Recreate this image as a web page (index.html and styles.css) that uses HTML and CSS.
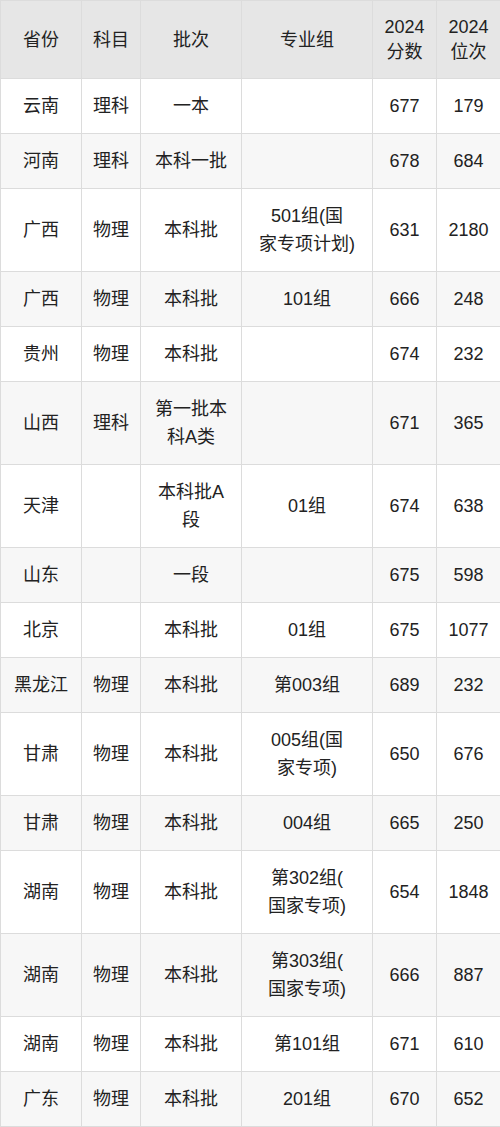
FILE: index.html
```html
<!DOCTYPE html>
<html lang="zh">
<head>
<meta charset="utf-8">
<link rel="stylesheet" href="styles.css">
</head>
<body>
<table class="score-table">
  <colgroup>
    <col class="c-prov"><col class="c-subj"><col class="c-batch"><col class="c-group"><col class="c-score"><col class="c-rank">
  </colgroup>
  <thead>
    <tr><th>省份</th><th>科目</th><th>批次</th><th>专业组</th><th>2024<br>分数</th><th>2024<br>位次</th></tr>
  </thead>
  <tbody>
    <tr><td>云南</td><td>理科</td><td>一本</td><td></td><td>677</td><td>179</td></tr>
    <tr><td>河南</td><td>理科</td><td>本科一批</td><td></td><td>678</td><td>684</td></tr>
    <tr><td>广西</td><td>物理</td><td>本科批</td><td>501组(国<br>家专项计划)</td><td>631</td><td>2180</td></tr>
    <tr><td>广西</td><td>物理</td><td>本科批</td><td>101组</td><td>666</td><td>248</td></tr>
    <tr><td>贵州</td><td>物理</td><td>本科批</td><td></td><td>674</td><td>232</td></tr>
    <tr><td>山西</td><td>理科</td><td>第一批本<br>科A类</td><td></td><td>671</td><td>365</td></tr>
    <tr><td>天津</td><td></td><td>本科批A<br>段</td><td>01组</td><td>674</td><td>638</td></tr>
    <tr><td>山东</td><td></td><td>一段</td><td></td><td>675</td><td>598</td></tr>
    <tr><td>北京</td><td></td><td>本科批</td><td>01组</td><td>675</td><td>1077</td></tr>
    <tr><td>黑龙江</td><td>物理</td><td>本科批</td><td>第003组</td><td>689</td><td>232</td></tr>
    <tr><td>甘肃</td><td>物理</td><td>本科批</td><td>005组(国<br>家专项)</td><td>650</td><td>676</td></tr>
    <tr><td>甘肃</td><td>物理</td><td>本科批</td><td>004组</td><td>665</td><td>250</td></tr>
    <tr><td>湖南</td><td>物理</td><td>本科批</td><td>第302组(<br>国家专项)</td><td>654</td><td>1848</td></tr>
    <tr><td>湖南</td><td>物理</td><td>本科批</td><td>第303组(<br>国家专项)</td><td>666</td><td>887</td></tr>
    <tr><td>湖南</td><td>物理</td><td>本科批</td><td>第101组</td><td>671</td><td>610</td></tr>
    <tr><td>广东</td><td>物理</td><td>本科批</td><td>201组</td><td>670</td><td>652</td></tr>
  </tbody>
</table>
</body>
</html>
```

FILE: styles.css
```css
html, body {
  margin: 0;
  padding: 0;
  background: #ffffff;
}

.score-table {
  width: 500px;
  table-layout: fixed;
  border-collapse: collapse;
  font-family: "Liberation Sans", "Noto Sans CJK SC", sans-serif;
  font-size: 18px;
  color: #222222;
}

.c-prov { width: 81px; }
.c-subj { width: 59px; }
.c-batch { width: 101px; }
.c-group { width: 131px; }
.c-score { width: 64px; }
.c-rank { width: 64px; }

.score-table th,
.score-table td {
  border: 1px solid #dcdcdc;
  text-align: center;
  vertical-align: middle;
  padding: 13px 2px 13px 2px;
  line-height: 28px;
  white-space: nowrap;
}

.score-table th {
  background: #e6e6e6;
  font-weight: normal;
  line-height: 25px;
  padding-top: 14px;
}

.score-table tbody tr:nth-child(even) td {
  background: #f7f7f7;
}
```
